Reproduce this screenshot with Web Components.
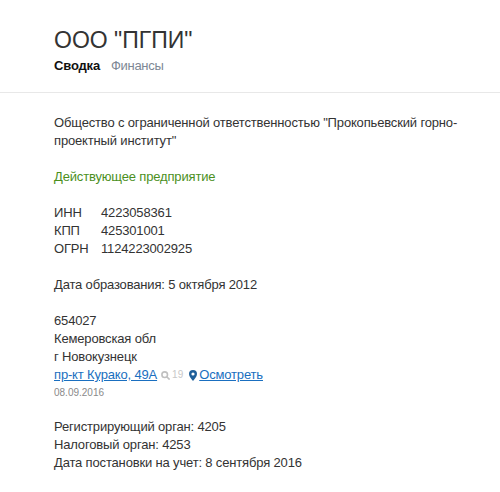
<!DOCTYPE html>
<html lang="ru">
<head>
<meta charset="utf-8">
<title>ООО "ПГПИ"</title>
<style>
  html, body { margin: 0; padding: 0; background: #fff; }
  body { font-family: "Liberation Sans", Arial, sans-serif; font-size: 13px; line-height: 18px; letter-spacing: -0.16px; color: #333; }
</style>
</head>
<body>
<company-header name='ООО "ПГПИ"'>
  <span slot="active">Сводка</span>
  <span slot="other">Финансы</span>
</company-header>
<company-body>
  <info-block>Общество с ограниченной ответственностью "Прокопьевский горно-проектный институт"</info-block>
  <info-block style="color:#4b8f1d">Действующее предприятие</info-block>
  <info-block>
    <code-row label="ИНН" value="4223058361"></code-row>
    <code-row label="КПП" value="425301001"></code-row>
    <code-row label="ОГРН" value="1124223002925"></code-row>
  </info-block>
  <info-block>Дата образования: 5 октября 2012</info-block>
  <info-block>
    <div>654027</div>
    <div>Кемеровская обл</div>
    <div>г Новокузнецк</div>
    <address-line street="пр-кт Курако, 49А" count="19" look="Осмотреть" date="08.09.2016"></address-line>
  </info-block>
  <info-block>
    <div>Регистрирующий орган: 4205</div>
    <div>Налоговый орган: 4253</div>
    <div>Дата постановки на учет: 8 сентября 2016</div>
  </info-block>
</company-body>
<script>
class CompanyHeader extends HTMLElement {
  constructor() {
    super();
    this.attachShadow({ mode: "open" });
  }
  connectedCallback() {
    this.shadowRoot.innerHTML = `
      <style>
        :host { display: block; padding: 24px 54px 0; height: 68px; border-bottom: 1px solid #e8e8e8; }
        h1 { margin: 0; font-size: 23px; line-height: 32px; font-weight: 400; letter-spacing: 0; color: #333; }
        nav { display: flex; gap: 11px; margin-top: 1px; line-height: 18px; }
        .active { font-weight: 700; color: #111; }
        .other { color: #7d8794; letter-spacing: -0.3px; }
      </style>
      <h1>${this.getAttribute("name")}</h1>
      <nav>
        <span class="active"><slot name="active"></slot></span>
        <span class="other"><slot name="other"></slot></span>
      </nav>
    `;
  }
}
customElements.define("company-header", CompanyHeader);

class CompanyBody extends HTMLElement {
  constructor() {
    super();
    this.attachShadow({ mode: "open" });
    this.shadowRoot.innerHTML = `
      <style>
        :host { display: flex; flex-direction: column; gap: 18px; padding: 21px 40px 0 54px; }
      </style>
      <slot></slot>
    `;
  }
}
customElements.define("company-body", CompanyBody);

class InfoBlock extends HTMLElement {
  constructor() {
    super();
    this.attachShadow({ mode: "open" });
    this.shadowRoot.innerHTML = `
      <style>:host { display: block; }</style>
      <slot></slot>
    `;
  }
}
customElements.define("info-block", InfoBlock);

class CodeRow extends HTMLElement {
  constructor() {
    super();
    this.attachShadow({ mode: "open" });
  }
  connectedCallback() {
    this.shadowRoot.innerHTML = `
      <style>
        :host { display: grid; grid-template-columns: 47px auto; justify-content: start; }
      </style>
      <span>${this.getAttribute("label")}</span>
      <span>${this.getAttribute("value")}</span>
    `;
  }
}
customElements.define("code-row", CodeRow);

class AddressLine extends HTMLElement {
  constructor() {
    super();
    this.attachShadow({ mode: "open" });
  }
  connectedCallback() {
    this.shadowRoot.innerHTML = `
      <style>
        :host { display: block; }
        .line { display: flex; align-items: center; height: 18px; }
        a { color: #1a6fc0; text-decoration: underline; }
        .count { display: inline-flex; align-items: center; gap: 2px; margin: 0 6px 0 4px; font-size: 10px; letter-spacing: 0; color: #c8c8c8; }
        .look { display: inline-flex; align-items: center; gap: 2px; }
        svg { display: block; }
        .date { font-size: 10px; letter-spacing: 0; line-height: 14px; color: #8a8a8a; margin-top: 2px; }
      </style>
      <div class="line">
        <a href="#">${this.getAttribute("street")}</a>
        <span class="count">
          <svg width="9" height="9" viewBox="0 0 9 9" fill="none" stroke="#c0c0c0" stroke-width="1.6"><circle cx="3.7" cy="3.7" r="2.8"/><path d="M5.7 5.7 8.6 8.6"/></svg>
          ${this.getAttribute("count")}
        </span>
        <span class="look">
          <svg width="8" height="11" viewBox="0 0 8 11"><path fill="#1f5f99" fill-rule="evenodd" d="M4 0a4 4 0 0 1 4 4c0 2.6-2.6 5-4 7C2.600 9 0 6.600 0 4a4 4 0 0 1 4-4Zm0 2.400a1.600 1.600 0 1 0 0 3.200 1.600 1.600 0 0 0 0-3.200Z"/></svg>
          <a href="#">${this.getAttribute("look")}</a>
        </span>
      </div>
      <div class="date">${this.getAttribute("date")}</div>
    `;
  }
}
customElements.define("address-line", AddressLine);
</script>
</body>
</html>
